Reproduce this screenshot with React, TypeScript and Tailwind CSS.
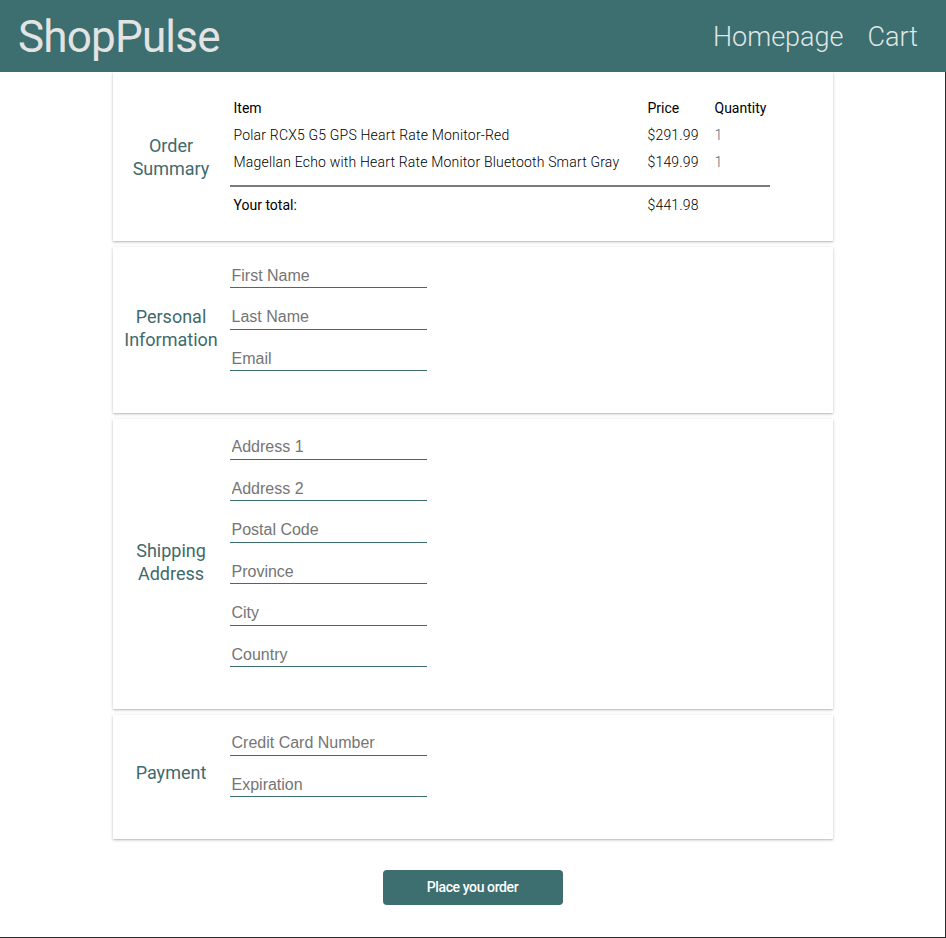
import React from 'react';

const teal = 'bg-[#3d6e70]';

type Item = { name: string; price: string; qty: number };

const items: Item[] = [
  { name: 'Polar RCX5 G5 GPS Heart Rate Monitor-Red', price: '$291.99', qty: 1 },
  { name: 'Magellan Echo with Heart Rate Monitor Bluetooth Smart Gray', price: '$149.99', qty: 1 },
];

const Section: React.FC<{ label: string[]; children: React.ReactNode; className?: string; lift?: string }> = ({
  label,
  children,
  className = '',
  lift = '',
}) => (
  <section
    className={`flex items-center bg-white shadow-[0_1px_3px_rgba(0,0,0,0.22),0_1px_1px_rgba(0,0,0,0.08)] ${className}`}
  >
    <h2 className={`w-[117px] shrink-0 text-center text-[18px] leading-[23px] text-[#3f6a6c] ${lift}`}>
      {label.map((l) => (
        <span key={l} className="block">
          {l}
        </span>
      ))}
    </h2>
    <div className="flex-1 self-stretch">{children}</div>
  </section>
);

const Field: React.FC<{ placeholder: string }> = ({ placeholder }) => (
  <input
    type="text"
    placeholder={placeholder}
    className="block w-[197px] h-[30px] mb-[11.5px] pt-[6px] px-[2px] border-b border-[#3d6e70] font-['Liberation_Sans',Arial,sans-serif] text-[16px] text-[#333] placeholder:text-[#757575] outline-none bg-transparent"
  />
);

const FieldGroup: React.FC<{ fields: string[] }> = ({ fields }) => (
  <div className="pt-[11px] pb-[30px]">
    {fields.map((f) => (
      <Field key={f} placeholder={f} />
    ))}
  </div>
);

export default function App() {
  return (
    <div className="w-[946px] h-[938px] bg-white font-['Roboto','Liberation_Sans',sans-serif] relative overflow-hidden">
      <header className={`${teal} h-[72px] flex items-center justify-between pl-[18px] pr-[28px] pt-[3px] relative z-10`}>
        <h1 className="text-[44px] leading-none text-[#e3e3e3] tracking-[-0.8px] pb-[2px]">ShopPulse</h1>
        <nav className="flex gap-[24px] text-[27px] font-light text-[#dfe6e6]">
          <a>Homepage</a>
          <a>Cart</a>
        </nav>
      </header>

      <main className="h-[866px] border-r border-b border-[#2a2a2a] flex flex-col items-center">
        <div className="w-[720px] flex flex-col gap-[6px]">
          <Section label={['Order', 'Summary']} className="pt-[22px] pb-[22px]">
            <table className="w-[540px] table-fixed border-collapse text-[14px] text-black">
              <colgroup>
                <col className="w-[414px]" />
                <col className="w-[67px]" />
                <col />
              </colgroup>
              <thead>
                <tr className="h-[28px]">
                  <th className="px-[4px] text-left font-normal">Item</th>
                  <th className="px-[4px] text-left font-normal">Price</th>
                  <th className="px-[4px] text-left font-normal">Quantity</th>
                </tr>
              </thead>
              <tbody className="font-light">
                {items.map((it) => (
                  <tr key={it.name} className="h-[27px] tracking-[0.19px]">
                    <td className="px-[4px] whitespace-nowrap">{it.name}</td>
                    <td className="px-[4px]">{it.price}</td>
                    <td className="px-[4px] text-[#3f6f86]">{it.qty}</td>
                  </tr>
                ))}
                <tr>
                  <td colSpan={3} className="pt-[9px] pb-[5px]">
                    <div className="h-[2px] bg-[#7a7a7a]" />
                  </td>
                </tr>
                <tr className="h-[27px]">
                  <td className="px-[4px] font-normal">Your total:</td>
                  <td className="px-[4px] tracking-[0.19px]">$441.98</td>
                  <td />
                </tr>
              </tbody>
            </table>
          </Section>

          <Section label={['Personal', 'Information']} lift="mb-[4px]">
            <FieldGroup fields={['First Name', 'Last Name', 'Email']} />
          </Section>

          <Section label={['Shipping', 'Address']} lift="mb-[4px]">
            <FieldGroup fields={['Address 1', 'Address 2', 'Postal Code', 'Province', 'City', 'Country']} />
          </Section>

          <Section label={['Payment']} lift="mb-[8px]">
            <FieldGroup fields={['Credit Card Number', 'Expiration']} />
          </Section>
        </div>

        <button
          className={`${teal} mt-[31px] w-[180px] h-[35px] rounded-[4px] text-white text-[14px] font-medium tracking-[-0.4px]`}
        >
          Place you order
        </button>
      </main>
    </div>
  );
}
